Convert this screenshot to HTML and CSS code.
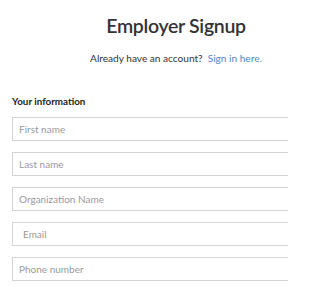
FILE: index.html
```html
<!DOCTYPE html>
<html>
<head>
<meta charset="utf-8">
<link rel="stylesheet" href="styles.css">
</head>
<body>
<div class="page">
  <header class="header">
    <h1 class="title">Employer Signup</h1>
    <p class="login">Already have an account?&nbsp; <a href="#" class="link">Sign in here.</a></p>
  </header>
  <h2 class="section">Your information</h2>
  <form class="form">
    <input class="field" type="text" placeholder="First name">
    <input class="field" type="text" placeholder="Last name">
    <input class="field" type="text" placeholder="Organization Name">
    <input class="field field-email" type="text" placeholder="Email">
    <input class="field" type="text" placeholder="Phone number">
  </form>
</div>
</body>
</html>
```
FILE: styles.css
```css
html, body {
  margin: 0;
  padding: 0;
  background: #ffffff;
  width: 288px;
  height: 288px;
  overflow: hidden;
}
body {
  font-family: Lato, "Open Sans", sans-serif;
  color: #333;
}
.page {
  box-sizing: border-box;
  width: 288px;
  padding: 14px 0 0 12px;
}
.header {
  padding-left: 52px;
  text-align: center;
}
.title {
  margin: 0;
  font-size: 19.5px;
  font-weight: 600;
  letter-spacing: -0.3px;
  color: #333;
  line-height: 24px;
}
.login {
  margin: 13px 0 0;
  font-size: 10.1px;
  line-height: 14px;
  color: #333;
}
.link {
  color: #4a89c8;
  text-decoration: none;
}
.section {
  margin: 29px 0 0;
  font-size: 9.8px;
  font-weight: 700;
  line-height: 14px;
  color: #222;
}
.form {
  display: flex;
  flex-direction: column;
  gap: 11px;
  margin-top: 9px;
}
.field {
  box-sizing: border-box;
  height: 24px;
  width: 100%;
  border: 1px solid #d4d4d4;
  border-right: none;
  border-radius: 0;
  padding: 0 6px;
  font-family: Lato, "Open Sans", sans-serif;
  font-size: 10px;
  color: #333;
  background: #fff;
  outline: none;
}
.field::placeholder {
  color: #9a9a9a;
}
.field-email {
  padding-left: 10px;
}
```
